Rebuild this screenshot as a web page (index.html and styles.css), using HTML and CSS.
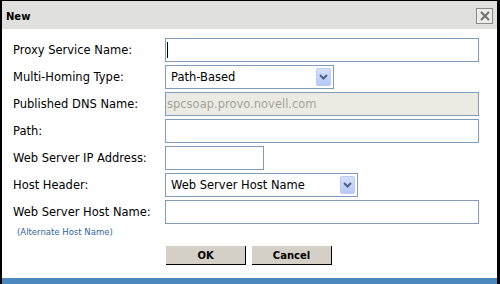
FILE: index.html
```html
<!DOCTYPE html>
<html lang="en">
<head>
    <meta charset="UTF-8">
    <title>New</title>
    <link rel="stylesheet" href="styles.css">
</head>
<body>
    <div class="dialog">
        <!-- Title bar -->
        <div class="titlebar">
            <span class="title">New</span>
            <span class="close-button">
                <svg viewBox="0 0 14 14" width="14" height="14"><path d="M3 3l8 8M11 3l-8 8" stroke="#6e6e6e" stroke-width="2"/></svg>
            </span>
        </div>

        <!-- Form rows -->
        <div class="form">
            <label class="label">Proxy Service Name:</label>
            <div class="field field-wide"><span class="caret"></span></div>

            <label class="label">Multi-Homing Type:</label>
            <div class="field select select-type">
                <span class="select-text">Path-Based</span>
                <span class="select-arrow"><svg viewBox="0 0 9 6" width="9" height="6"><path d="M1 1l3.5 3.5L8 1" fill="none" stroke="#4d6185" stroke-width="2"/></svg></span>
            </div>

            <label class="label">Published DNS Name:</label>
            <div class="field field-wide disabled">spcsoap.provo.novell.com</div>

            <label class="label">Path:</label>
            <div class="field field-wide"></div>

            <label class="label">Web Server IP Address:</label>
            <div class="field field-ip"></div>

            <label class="label">Host Header:</label>
            <div class="field select select-host">
                <span class="select-text">Web Server Host Name</span>
                <span class="select-arrow"><svg viewBox="0 0 9 6" width="9" height="6"><path d="M1 1l3.5 3.5L8 1" fill="none" stroke="#4d6185" stroke-width="2"/></svg></span>
            </div>

            <label class="label">Web Server Host Name:</label>
            <div class="field field-wide"></div>
        </div>

        <div class="hint">(Alternate Host Name)</div>

        <!-- Buttons -->
        <div class="buttons">
            <button class="button">OK</button>
            <button class="button">Cancel</button>
        </div>

        <div class="bottom-bar"></div>
    </div>
</body>
</html>
```

FILE: styles.css
```css
/* Page */
body {
    margin: 0;
    width: 500px;
    height: 284px;
    overflow: hidden;
    font-family: "DejaVu Sans", Verdana, sans-serif;
    font-size: 11.5px;
    color: #000;
}

/* Dialog frame */
.dialog {
    box-sizing: border-box;
    width: 500px;
    height: 284px;
    border-top: 1px solid #000;
    border-left: 2px solid #000;
    border-right: 3px solid #000;
    background: #fff;
    display: flex;
    flex-direction: column;
}

/* Title bar */
.titlebar {
    height: 28px;
    background: #e0e0de;
    display: flex;
    align-items: center;
    justify-content: space-between;
    padding: 0 4px 0 4px;
}

.title {
    font-weight: bold;
    font-size: 10px;
    margin-top: 2px;
}

.close-button {
    box-sizing: border-box;
    width: 17px;
    height: 16px;
    border: 1px solid #8a8a8a;
    background: #ecece9;
    display: flex;
    align-items: center;
    justify-content: center;
    margin-top: 1px;
}

/* Form */
.form {
    display: grid;
    grid-template-columns: 152px 1fr;
    row-gap: 3px;
    padding: 9px 16px 0 11px;
    align-items: center;
}

.label {
    line-height: 24px;
}

.field {
    box-sizing: border-box;
    height: 24px;
    border: 1px solid #7f9db9;
    background: #fff;
    display: flex;
    align-items: center;
}

.field-wide {
    width: 314px;
}

.field-ip {
    width: 99px;
}

.caret {
    width: 1px;
    height: 16px;
    background: #000;
    margin-left: 1px;
}

.disabled {
    background: #ebebe4;
    color: #a3a39c;
    padding-left: 1px;
}

/* Select boxes */
.select {
    justify-content: space-between;
    padding: 0 2px 0 5px;
}

.select-type {
    width: 169px;
}

.select-host {
    width: 193px;
}

.select-arrow {
    box-sizing: border-box;
    width: 15px;
    height: 18px;
    border: 1px solid #b9ccf3;
    border-radius: 2px;
    background: linear-gradient(180deg, #d4e0fb, #b6c9f5);
    display: flex;
    align-items: center;
    justify-content: center;
}

/* Hint */
.hint {
    height: 12px;
    line-height: 12px;
    font-size: 8.5px;
    color: #33669a;
    padding: 2px 0 0 15px;
}

/* Buttons */
.buttons {
    display: flex;
    gap: 6px;
    padding: 8px 0 0 164px;
}

.button {
    box-sizing: border-box;
    width: 80px;
    height: 19px;
    margin: 0;
    padding: 0;
    background: #d4d0c8;
    border: none;
    border-right: 1px solid #000;
    border-bottom: 1px solid #000;
    font-family: "DejaVu Sans", Verdana, sans-serif;
    font-size: 10px;
    font-weight: bold;
    color: #000;
}

/* Bottom strip */
.bottom-bar {
    margin-top: auto;
    height: 6px;
    background: #4a88bd;
}
```
